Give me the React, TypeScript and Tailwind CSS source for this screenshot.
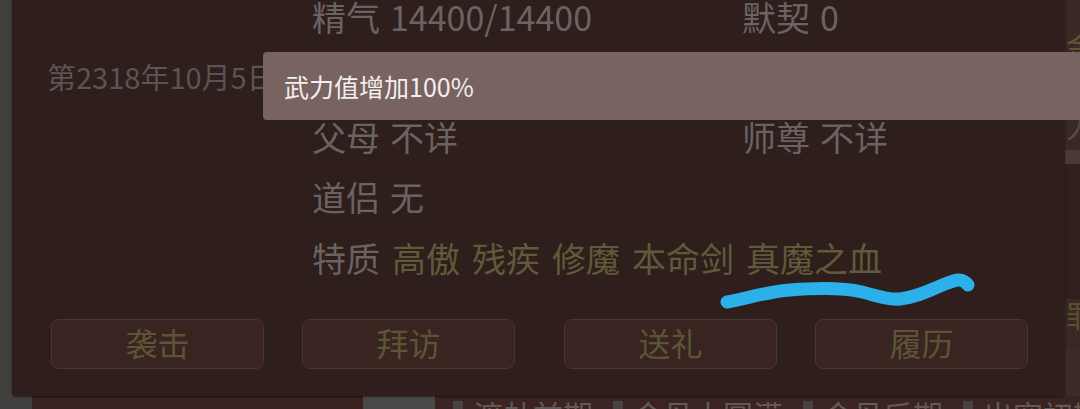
import React from "react";

const traits = ["高傲", "残疾", "修魔", "本命剑", "真魔之血"];
const buttons = [["袭击", "拜访"], ["送礼", "履历"]];
const ranks = ["渡劫前期", "金丹大圆满", "金丹后期", "出窍初期"];

function InfoRow({ date, left, right }: { date?: string; left?: React.ReactNode; right?: React.ReactNode }) {
  return (
    <div className="flex h-[60px] items-center">
      <div className="w-[300px] shrink-0 pl-[35px] -mt-[3px] text-[29px] leading-none whitespace-nowrap text-[#5c5452]">{date}</div>
      <div className="w-[430px] shrink-0 whitespace-nowrap">{left}</div>
      <div className="whitespace-nowrap">{right}</div>
    </div>
  );
}

function Field({ label, value }: { label: string; value: string }) {
  return (
    <span className="text-[34px] leading-none text-[#6a6361]">
      {label}
      <span className="ml-[10px]">{value}</span>
    </span>
  );
}

export default function App() {
  return (
    <div
      className="relative w-[1080px] h-[409px] overflow-hidden bg-[#41403e]"
      style={{ fontFamily: '"Noto Sans CJK SC", "Noto Sans", sans-serif' }}
    >
      {/* page behind the dialog */}
      <div className="absolute right-0 top-0 bottom-0 w-[16px] flex flex-col bg-[#3a2824] overflow-hidden">
        <div className="h-[110px] pt-[30px] pl-[2px] text-[30px] leading-none text-[#5e5632]">金</div>
        <div className="h-[40px] pl-[2px] text-[30px] leading-none text-[#504a48]">人</div>
        <div className="h-[14px] bg-[#4a3a36]" />
        <div className="h-[135px] bg-[#2f201e]" />
        <div className="h-[50px] pl-[2px] text-[30px] leading-none text-[#56512f]">罪</div>
        <div className="flex-1 bg-[#3d2b28]" />
      </div>
      <div className="absolute left-0 right-0 top-[396px] h-[13px] flex overflow-hidden">
        <div className="w-[32px] shrink-0 bg-[#41403e]" />
        <div className="w-[331px] shrink-0 bg-[#3a2220] pl-[15px] pt-[2px] text-[28px] leading-none text-[#6b6361]">一</div>
        <div className="w-[72px] shrink-0 bg-[#4a4948]" />
        <div className="flex flex-1 gap-[20px] bg-[#3a2321] pl-[18px] pt-[3px]">
          {ranks.map((r) => (
            <div key={r} className="flex items-start gap-[10px] text-[30px] leading-none text-[#5f5957] whitespace-nowrap">
              <span className="mt-[2px] w-[10px] h-[14px] bg-[#474342]" />
              {r}
            </div>
          ))}
        </div>
      </div>

      {/* dialog */}
      <div className="absolute left-[12px] top-0 w-[1053px] h-[396px] bg-[#2e1e1c] rounded-b-[4px] shadow-[0_1px_2px_rgba(0,0,0,0.5)] flex flex-col">
        <div className="-mt-[12px] flex flex-col">
          <InfoRow left={<Field label="精气" value="14400/14400" />} right={<Field label="默契" value="0" />} />
          <InfoRow date="第2318年10月5日" />
          <InfoRow left={<Field label="父母" value="不详" />} right={<Field label="师尊" value="不详" />} />
          <InfoRow left={<Field label="道侣" value="无" />} />
          <div className="flex h-[60px] items-center pl-[300px] text-[34px] leading-none whitespace-nowrap">
            <span className="text-[#6a6361]">特质</span>
            {traits.map((t) => (
              <span key={t} className="ml-[12px] text-[#605a3a]">{t}</span>
            ))}
          </div>
        </div>
        <div className="mt-[31px] flex gap-[49px] pl-[39px]">
          {buttons.map((group, i) => (
            <div key={i} className="flex gap-[38px]">
              {group.map((b) => (
                <button
                  key={b}
                  className="w-[213px] h-[50px] rounded-[8px] border border-[#4b3532] bg-[#3a2422] pb-[5px] text-[32px] leading-none text-[#5b5535]"
                >
                  {b}
                </button>
              ))}
            </div>
          ))}
        </div>
      </div>

      {/* annotation stroke */}
      <svg className="absolute left-0 top-0 pointer-events-none" width="1080" height="409" viewBox="0 0 1080 409">
        <path
          d="M727 302 C 745 299, 765 292, 790 290 C 815 288, 845 288, 862 292 C 878 296, 888 300, 900 299 C 918 297, 930 290, 945 284 C 955 280, 962 277, 968 285"
          fill="none"
          stroke="#2cb0e9"
          strokeWidth="13"
          strokeLinecap="round"
          strokeLinejoin="round"
        />
      </svg>

      {/* toast */}
      <div className="absolute left-[263px] right-0 top-[52px] h-[68px] rounded-l-[4px] bg-[#786361] flex items-center pl-[21px]">
        <span className="text-[25px] leading-none text-[#f4efee]">武力值增加100%</span>
      </div>
    </div>
  );
}
